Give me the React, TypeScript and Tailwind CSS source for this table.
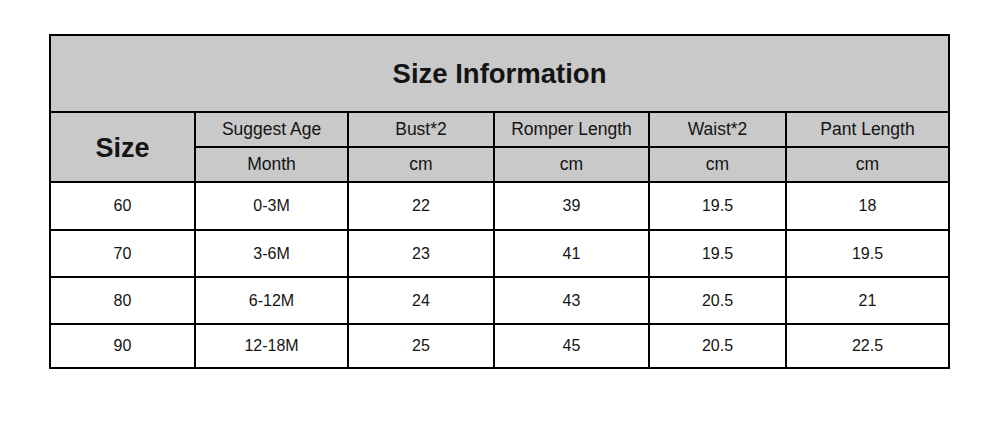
const cols = ["Suggest Age", "Bust*2", "Romper Length", "Waist*2", "Pant Length"];
const units = ["Month", "cm", "cm", "cm", "cm"];
const rows = [
  ["60", "0-3M", "22", "39", "19.5", "18"],
  ["70", "3-6M", "23", "41", "19.5", "19.5"],
  ["80", "6-12M", "24", "43", "20.5", "21"],
  ["90", "12-18M", "25", "45", "20.5", "22.5"],
];
const rowHeights = ["h-[48px]", "h-[47px]", "h-[47px]", "h-[44px]"];

export default function App() {
  return (
    <div className="w-[1000px] h-[421px] bg-white pt-[34px] pl-[49px] font-['Liberation_Sans',Arial,sans-serif] text-[#141414]">
      <table className="border-collapse table-fixed w-[899px] border-2 border-black text-center">
        <colgroup>
          <col className="w-[145px]" />
          <col className="w-[153px]" />
          <col className="w-[146px]" />
          <col className="w-[155px]" />
          <col className="w-[137px]" />
          <col className="w-[163px]" />
        </colgroup>
        <tbody>
          <tr className="h-[77px] bg-[#c9c9c9]">
            <td colSpan={6} className="border-2 border-black text-[27.5px] font-bold pt-[1px]">
              Size Information
            </td>
          </tr>
          <tr className="h-[35px] bg-[#c9c9c9]">
            <td rowSpan={2} className="border-2 border-black text-[27px] font-bold pt-[2px]">
              Size
            </td>
            {cols.map((c) => (
              <td key={c} className="border-2 border-black text-[17.5px]">
                {c}
              </td>
            ))}
          </tr>
          <tr className="h-[35px] bg-[#c9c9c9]">
            {units.map((u, i) => (
              <td key={i} className="border-2 border-black text-[17.5px]">
                {u}
              </td>
            ))}
          </tr>
          {rows.map((r, i) => (
            <tr key={r[0]} className={rowHeights[i]}>
              {r.map((v, j) => (
                <td key={j} className="border-2 border-black text-[16px]">
                  {v}
                </td>
              ))}
            </tr>
          ))}
        </tbody>
      </table>
    </div>
  );
}
